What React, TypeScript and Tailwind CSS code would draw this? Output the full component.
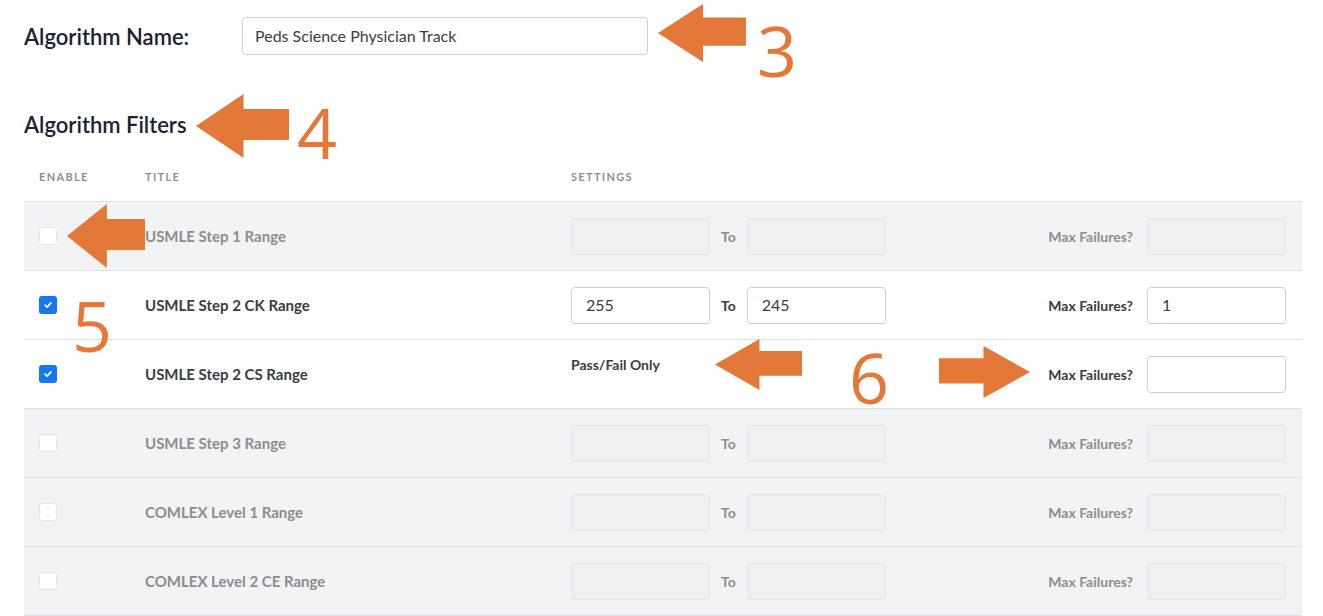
import React from 'react';

const ORANGE = '#e37838';

type Row = {
  title: string;
  enabled: boolean;
  from?: string;
  to?: string;
  max?: string;
  passFail?: boolean;
};

const rows: Row[] = [
  { title: 'USMLE Step 1 Range', enabled: false },
  { title: 'USMLE Step 2 CK Range', enabled: true, from: '255', to: '245', max: '1' },
  { title: 'USMLE Step 2 CS Range', enabled: true, passFail: true, max: '' },
  { title: 'USMLE Step 3 Range', enabled: false },
  { title: 'COMLEX Level 1 Range', enabled: false },
  { title: 'COMLEX Level 2 CE Range', enabled: false },
];

const Arrow = ({ dir, className }: { dir: 'left' | 'right'; className: string }) => (
  <svg viewBox="0 0 90 64" preserveAspectRatio="none" className={`absolute ${className}`}>
    {dir === 'left' ? (
      <polygon points="0,32 46,0 46,15 90,15 90,46 46,46 46,64" fill={ORANGE} />
    ) : (
      <polygon points="90,32 44,0 44,15 0,15 0,46 44,46 44,64" fill={ORANGE} />
    )}
  </svg>
);

const Num = ({ n, className }: { n: string; className: string }) => (
  <span
    className={`absolute text-[70px] leading-none text-[#e37838] ${className}`}
    style={{ fontFamily: '"Open Sans", sans-serif' }}
  >
    {n}
  </span>
);

const Field = ({ value, disabled }: { value?: string; disabled: boolean }) => (
  <div
    className={`w-[139px] h-[37px] rounded-[4px] border flex items-center px-[14px] text-[16px] ${
      disabled ? 'bg-[#eff0f2] border-[#e1e3e6]' : 'bg-white border-[#ccd0d5] text-[#3a3d42]'
    }`}
  >
    {value}
  </div>
);

const Checkbox = ({ checked }: { checked: boolean }) =>
  checked ? (
    <div className="w-[18px] h-[18px] rounded-[3px] bg-[#1479f0] flex items-center justify-center">
      <svg viewBox="0 0 12 12" className="w-[10px] h-[10px]">
        <path d="M2.5 6.2 L5 8.5 L9.5 3.5" stroke="white" strokeWidth="2" fill="none" strokeLinecap="round" strokeLinejoin="round" />
      </svg>
    </div>
  ) : (
    <div className="w-[18px] h-[18px] rounded-[3px] bg-white border border-[#e3e5e8]" />
  );

export default function App() {
  return (
    <div
      className="relative w-[1323px] h-[616px] overflow-hidden bg-white"
      style={{ fontFamily: 'Lato, "Liberation Sans", sans-serif' }}
    >
      <div className="pl-[24px] pr-[21px] pt-[17px]">
        <div className="flex items-center">
          <div className="w-[218px] text-[22px] font-semibold text-[#1b2033]">Algorithm Name:</div>
          <div className="w-[406px] h-[38px] rounded-[4px] border border-[#cdd1d6] flex items-center px-[12px] text-[16px] text-[#3a3d42]">
            Peds Science Physician Track
          </div>
        </div>

        <div className="mt-[57px] text-[22px] font-semibold text-[#1b2033] leading-[26px]">Algorithm Filters</div>

        <div className="mt-[31px] flex text-[11px] leading-[16px] font-bold tracking-[0.12em] text-[#8b9098] h-[32px]">
          <div className="w-[121px] pl-[15px]">ENABLE</div>
          <div className="w-[426px]">TITLE</div>
          <div>SETTINGS</div>
        </div>

        <div className="border-b border-[#dde0e4]">
          {rows.map((r) => {
            const dis = !r.enabled;
            const labelColor = dis ? 'text-[#8c8d90]' : 'text-[#3a3d42]';
            return (
              <div
                key={r.title}
                className={`flex items-center h-[69px] border-t border-[#dde0e4] ${dis ? 'bg-[#f2f3f5]' : 'bg-white'}`}
              >
                <div className="w-[121px] pl-[15px]">
                  <Checkbox checked={r.enabled} />
                </div>
                <div className={`w-[426px] text-[15px] font-bold ${labelColor}`}>{r.title}</div>
                <div className="flex-1 self-stretch flex items-center pr-[16px]">
                  {r.passFail ? (
                    <div className="self-start pt-[14px] text-[14px] font-bold text-[#3a3d42]">Pass/Fail Only</div>
                  ) : (
                    <>
                      <Field value={r.from} disabled={dis} />
                      <span className={`mx-[11px] text-[14px] font-bold ${labelColor}`}>To</span>
                      <Field value={r.to} disabled={dis} />
                    </>
                  )}
                  <div className="ml-auto flex items-center gap-[14px]">
                    <span className={`text-[14px] font-bold ${labelColor}`}>Max Failures?</span>
                    <Field value={r.max} disabled={dis} />
                  </div>
                </div>
              </div>
            );
          })}
        </div>
      </div>

      <Arrow dir="left" className="left-[658px] top-[4px] w-[88px] h-[58px]" />
      <Num n="3" className="left-[757px] top-[15px]" />

      <Arrow dir="left" className="left-[196px] top-[94px] w-[93px] h-[64px]" />
      <Num n="4" className="left-[297px] top-[97px]" />

      <Arrow dir="left" className="left-[67px] top-[204px] w-[78px] h-[64px]" />
      <Num n="5" className="left-[72px] top-[290px]" />

      <Arrow dir="left" className="left-[715px] top-[339px] w-[87px] h-[51px]" />
      <Num n="6" className="left-[849px] top-[342px]" />

      <Arrow dir="right" className="left-[939px] top-[346px] w-[91px] h-[52px]" />
    </div>
  );
}
